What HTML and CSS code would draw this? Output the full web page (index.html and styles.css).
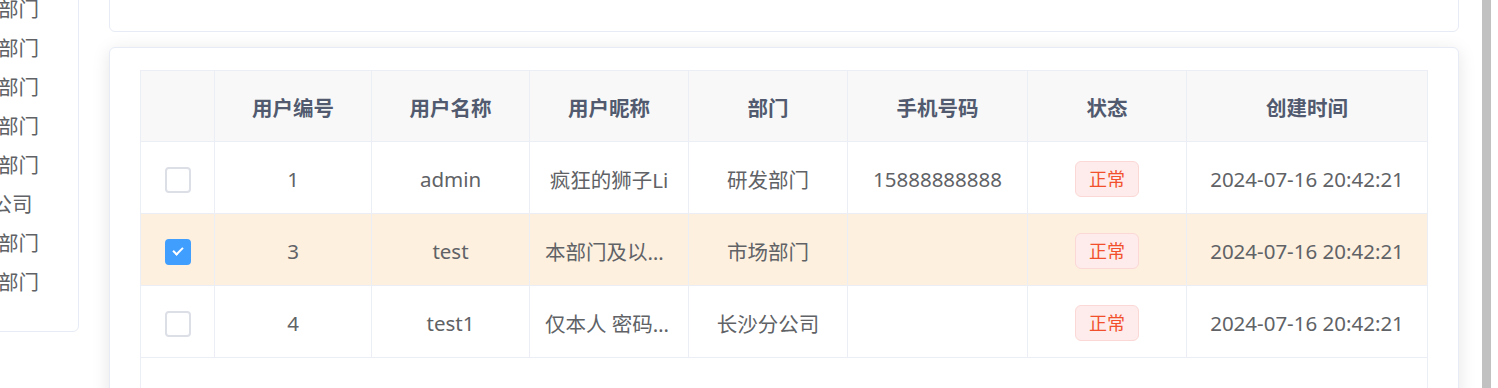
FILE: index.html
```html
<!DOCTYPE html>
<html>
  <head>
    <meta charset="UTF-8">
    <title>用户管理</title>
    <link rel="stylesheet" href="styles.css">
  </head>

  <body>
    <div class="layout">
      <!-- ARBRE DES DEPARTEMENTS -->
      <aside class="dept-panel">
        <ul class="dept-tree">
          <li class="node lv1">若依科技</li>
          <li class="node lv2">深圳总公司</li>
          <li class="node lv3">研发部门</li>
          <li class="node lv3">市场部门</li>
          <li class="node lv3">测试部门</li>
          <li class="node lv3">财务部门</li>
          <li class="node lv3">运维部门</li>
          <li class="node lv2">长沙分公司</li>
          <li class="node lv3">市场部门</li>
          <li class="node lv3">财务部门</li>
        </ul>
      </aside>

      <main class="content">
        <!-- zone de recherche -->
        <section class="card search-card"></section>

        <!-- TABLEAU DES UTILISATEURS -->
        <section class="card table-card">
          <div class="table-wrap">
            <table class="user-table">
              <colgroup>
                <col style="width: 74px">
                <col style="width: 157px">
                <col style="width: 158px">
                <col style="width: 159px">
                <col style="width: 159px">
                <col style="width: 180px">
                <col style="width: 159px">
                <col style="width: 240px">
              </colgroup>
              <thead>
                <tr>
                  <th><div class="cell"></div></th>
                  <th><div class="cell">用户编号</div></th>
                  <th><div class="cell">用户名称</div></th>
                  <th><div class="cell">用户昵称</div></th>
                  <th><div class="cell">部门</div></th>
                  <th><div class="cell">手机号码</div></th>
                  <th><div class="cell">状态</div></th>
                  <th><div class="cell">创建时间</div></th>
                </tr>
              </thead>
              <tbody>
                <tr>
                  <td><span class="checkbox"></span></td>
                  <td><div class="cell">1</div></td>
                  <td><div class="cell">admin</div></td>
                  <td><div class="cell">疯狂的狮子Li</div></td>
                  <td><div class="cell">研发部门</div></td>
                  <td><div class="cell">15888888888</div></td>
                  <td><div class="cell"><span class="tag">正常</span></div></td>
                  <td><div class="cell">2024-07-16 20:42:21</div></td>
                </tr>
                <tr class="row-selected">
                  <td><span class="checkbox checked"></span></td>
                  <td><div class="cell">3</div></td>
                  <td><div class="cell">test</div></td>
                  <td><div class="cell">本部门及以下 密码admin123</div></td>
                  <td><div class="cell">市场部门</div></td>
                  <td><div class="cell"></div></td>
                  <td><div class="cell"><span class="tag">正常</span></div></td>
                  <td><div class="cell">2024-07-16 20:42:21</div></td>
                </tr>
                <tr>
                  <td><span class="checkbox"></span></td>
                  <td><div class="cell">4</div></td>
                  <td><div class="cell">test1</div></td>
                  <td><div class="cell">仅本人 密码admin123</div></td>
                  <td><div class="cell">长沙分公司</div></td>
                  <td><div class="cell"></div></td>
                  <td><div class="cell"><span class="tag">正常</span></div></td>
                  <td><div class="cell">2024-07-16 20:42:21</div></td>
                </tr>
              </tbody>
            </table>
          </div>
        </section>
      </main>

      <div class="scroll-thumb"></div>
    </div>
  </body>
</html>
```

FILE: styles.css
```css
/* CSS styles */
body {
  margin: 0;
  background: #fff;
  font-family: "Noto Sans", "Noto Sans CJK SC", sans-serif;
  font-size: 20.5px;
  color: #606266;
  overflow: hidden;
}

.layout {
  display: flex;
  align-items: flex-start;
  margin: -100px 0 0 -172px;
}

/* arbre */
.dept-panel {
  flex: none;
  width: 251px;
  height: 432px;
  box-sizing: border-box;
  border: 1px solid #e6ebf5;
  border-radius: 6px;
  padding: 11px 0 0 38px;
}

.dept-tree {
  list-style: none;
  margin: 0;
  padding: 0;
}

.node {
  height: 39px;
  line-height: 39px;
  white-space: nowrap;
}

.node::before {
  content: "";
  display: inline-block;
  width: 36px;
}

.lv2 { padding-left: 27px; }
.lv3 { padding-left: 54px; }

/* colonne principale */
.content {
  flex: none;
  width: 1350px;
  margin-left: 30px;
}

.card {
  box-sizing: border-box;
  background: #fff;
  border: 1px solid #e6ebf5;
  border-radius: 6px;
}

.search-card {
  height: 132px;
  margin-bottom: 15px;
}

.table-card {
  padding: 22px 30px;
  box-shadow: 0 3px 18px rgba(0,0,0,0.1);
}

.table-wrap {
  border: 1px solid #ebeef5;
  min-height: 340px;
}

.user-table {
  width: 100%;
  table-layout: fixed;
  border-collapse: separate;
  border-spacing: 0;
}

.user-table th,
.user-table td {
  padding: 0;
  text-align: center;
  border-right: 1px solid #ebeef5;
  border-bottom: 1px solid #ebeef5;
}

.user-table th:last-child,
.user-table td:last-child {
  border-right: 0;
}

.user-table th {
  height: 70px;
  background: #f8f8f9;
  color: #515a6e;
  font-weight: bold;
}

.user-table td {
  height: 71px;
}

.cell {
  padding: 2px 15px 0;
  overflow: hidden;
  white-space: nowrap;
  text-overflow: ellipsis;
}

.row-selected td {
  background: #fdf0df;
}

.checkbox {
  display: block;
  width: 26px;
  height: 26px;
  margin: 5px auto 0;
  box-sizing: border-box;
  border: 2px solid #dcdfe6;
  border-radius: 4px;
  background: #fff;
  position: relative;
}

.checkbox.checked {
  background: #409eff;
  border-color: #409eff;
}

.checkbox.checked::after {
  content: "";
  position: absolute;
  left: 8px;
  top: 4px;
  width: 4px;
  height: 8px;
  border: solid #fff;
  border-width: 0 2px 2px 0;
  transform: rotate(45deg);
}

.tag {
  display: inline-block;
  height: 36px;
  line-height: 34px;
  padding: 0 13px;
  box-sizing: border-box;
  font-size: 18px;
  color: #f2502c;
  background: #fdeceb;
  border: 1px solid #fbd8d6;
  border-radius: 6px;
}

.scroll-thumb {
  flex: none;
  align-self: stretch;
  width: 9px;
  margin-left: 23px;
  background: #c1c1c1;
}
```
